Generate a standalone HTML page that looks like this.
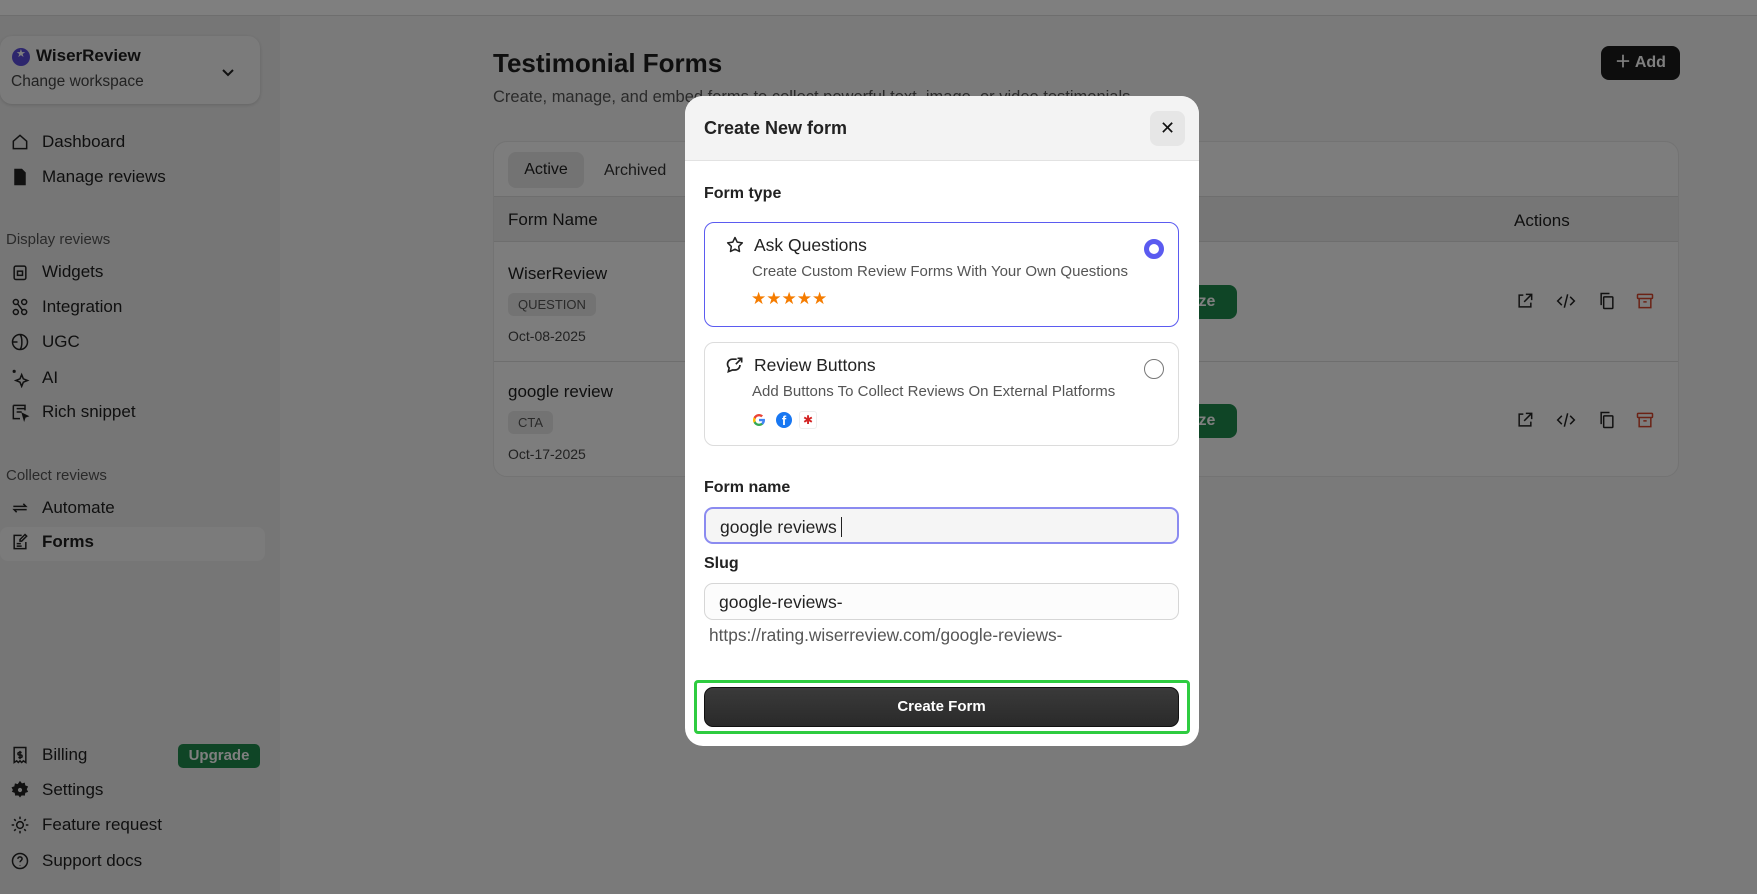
<!DOCTYPE html>
<html><head><meta charset="utf-8"><style>
*{box-sizing:border-box;margin:0;padding:0}
body{width:1757px;height:894px;position:relative;overflow:hidden;font-family:"Liberation Sans",sans-serif;background:#f4f4f4;color:#1f1f1f}
.a{position:absolute;white-space:nowrap}
.side{position:absolute;left:0;top:16px;width:280px;height:878px;background:#ececec}
.top{position:absolute;left:0;top:0;width:1757px;height:16px;background:#fff;border-bottom:1px solid #ddd}
.nav{position:absolute;left:10px;font-size:17px;color:#1f1f1f;display:flex;align-items:center;gap:12px}
.nav svg{width:20px;height:20px;stroke:#222;fill:none;stroke-width:1.8}
.sec{position:absolute;left:6px;font-size:15px;color:#555}
.ov{position:absolute;inset:0;background:rgba(0,0,0,0.5)}
.badge{position:absolute;background:#e6e6e6;border-radius:6px;font-size:13px;color:#555;padding:4px 10px}
.modal{position:absolute;left:685px;top:96px;width:514px;height:650px;background:#fff;border-radius:18px;overflow:hidden}
.card{position:absolute;left:19px;width:475px;border-radius:10px;background:#fff}
.lbl{position:absolute;left:19px;font-size:16px;font-weight:bold;color:#222}
.inp{position:absolute;left:19px;width:475px;height:37px;border-radius:9px;font-size:17.5px;padding:8px 14px;color:#222}
.ic svg{width:20px;height:20px;fill:none;stroke:#222;stroke-width:1.8}
</style></head><body>
<div class="top"></div>
<div class="side"></div>
<div class="a" style="left:0;top:36px;width:260px;height:68px;background:#f6f6f6;border-radius:12px;box-shadow:0 1px 3px rgba(0,0,0,.15)"></div>
<div class="a" style="left:12px;top:48px;width:18px;height:18px;border-radius:50%;background:#5b4cdb"></div>
<div class="a" style="left:16px;top:47px;color:#fff;font-size:11px">★</div>
<div class="a" style="left:36px;top:46px;font-size:17px;font-weight:bold">WiserReview</div>
<div class="a" style="left:11px;top:73px;font-size:15.5px;color:#444">Change workspace</div>
<svg class="a" style="left:220px;top:64px" width="16" height="16" viewBox="0 0 16 16"><path d="M3 6l5 5 5-5" stroke="#222" stroke-width="2" fill="none"/></svg>

<div class="nav" style="top:132px"><svg viewBox="0 0 24 24"><path d="M4 11l8-7 8 7v9H4z"/></svg>Dashboard</div>
<div class="nav" style="top:167px"><svg viewBox="0 0 24 24"><path d="M6 3h8l4 4v14H6z" fill="#222"/></svg>Manage reviews</div>
<div class="sec" style="top:231px">Display reviews</div>
<div class="nav" style="top:262px"><svg viewBox="0 0 24 24"><rect x="5" y="5" width="14" height="16" rx="2"/><rect x="9" y="11" width="6" height="5"/></svg>Widgets</div>
<div class="nav" style="top:297px"><svg viewBox="0 0 24 24"><circle cx="7" cy="6" r="3"/><circle cx="17" cy="6" r="3"/><circle cx="7" cy="18" r="3"/><circle cx="17" cy="18" r="3"/><path d="M9 8l6 8"/></svg>Integration</div>
<div class="nav" style="top:332px"><svg viewBox="0 0 24 24"><circle cx="12" cy="12" r="9"/><path d="M3 12h6M12 3c3 3 3 15 0 18"/></svg>UGC</div>
<div class="nav" style="top:368px"><svg viewBox="0 0 24 24"><path d="M14 8l2 5 5 2-5 2-2 5-2-5-5-2 5-2z"/><circle cx="5" cy="4" r="1" fill="#222"/></svg>AI</div>
<div class="nav" style="top:402px"><svg viewBox="0 0 24 24"><path d="M4 4h14v6M4 4v16h8M8 8h10M8 12h6"/><path d="M15 14l6 3-3 1-1 3z" fill="#222"/></svg>Rich snippet</div>
<div class="sec" style="top:467px">Collect reviews</div>
<div class="nav" style="top:498px"><svg viewBox="0 0 24 24"><path d="M4 10h15l-3-3M20 14H5l3 3"/></svg>Automate</div>
<div class="a" style="left:0;top:527px;width:265px;height:34px;background:#f7f7f7;border-radius:8px"></div>
<div class="nav" style="top:532px;font-weight:bold"><svg viewBox="0 0 24 24"><path d="M14 4H5v16h14v-8M8 14h5M8 17h6"/><path d="M18 3l2 2-6 6h-2v-2z"/></svg>Forms</div>
<div class="nav" style="top:745px"><svg viewBox="0 0 24 24"><path d="M5 3h14v18l-3-2-2 2-2-2-2 2-2-2-3 2z"/><path d="M12 7v10M14 9h-3a1.5 1.5 0 000 3h2a1.5 1.5 0 010 3h-3"/></svg>Billing</div>
<div class="a" style="left:178px;top:744px;width:82px;height:24px;background:#1f8a4c;border-radius:5px;color:#fff;font-size:15px;font-weight:bold;text-align:center;line-height:24px">Upgrade</div>
<div class="nav" style="top:780px"><svg viewBox="0 0 24 24"><path d="M12 2.5l2 2.5 3-.8.6 3 2.9 1.1-1.4 2.7 1.4 2.7-2.9 1.1-.6 3-3-.8-2 2.5-2-2.5-3 .8-.6-3-2.9-1.1L4.5 12 3.1 9.3 6 8.2l.6-3 3 .8z" fill="#222"/><circle cx="12" cy="12" r="2.5" fill="#ececec" stroke="none"/></svg>Settings</div>
<div class="nav" style="top:815px"><svg viewBox="0 0 24 24"><circle cx="12" cy="12" r="4"/><path d="M12 2v3M12 19v3M2 12h3M19 12h3M5 5l2 2M17 17l2 2M5 19l2-2M17 7l2-2"/></svg>Feature request</div>
<div class="nav" style="top:851px"><svg viewBox="0 0 24 24"><circle cx="12" cy="12" r="9"/><path d="M9.5 9.5a2.5 2.5 0 115 0c0 2-2.5 2-2.5 4M12 17v.5"/></svg>Support docs</div>

<div class="a" style="left:493px;top:48px;font-size:26px;font-weight:bold">Testimonial Forms</div>
<div class="a" style="left:493px;top:88px;font-size:16.5px;color:#555">Create, manage, and embed forms to collect powerful text, image, or video testimonials</div>
<div class="a" style="left:1601px;top:46px;width:79px;height:34px;background:#1a1a1a;border-radius:8px;color:#fff;font-size:16px;font-weight:bold;line-height:34px;padding-left:14px">＋ Add</div>

<div class="a" style="left:493px;top:141px;width:1186px;height:336px;background:#fafafa;border:1px solid #e6e6e6;border-radius:14px;overflow:hidden">
  <div class="a" style="left:14px;top:10px;width:76px;height:36px;background:#e6e6e6;border-radius:8px;font-size:16px;line-height:36px;text-align:center">Active</div>
  <div class="a" style="left:110px;top:20px;font-size:16px;color:#333">Archived</div>
  <div class="a" style="left:0;top:54px;width:1186px;height:46px;background:#ededed;border-top:1px solid #ddd;border-bottom:1px solid #ddd"></div>
  <div class="a" style="left:14px;top:68px;font-size:17px">Form Name</div>
  <div class="a" style="left:1020px;top:69px;font-size:17px">Actions</div>
  <div class="a" style="left:0;top:219px;width:1186px;height:1px;background:#ddd"></div>
  <div class="a" style="left:14px;top:122px;font-size:17px">WiserReview</div>
  <div class="badge" style="left:14px;top:151px">QUESTION</div>
  <div class="a" style="left:14px;top:186px;font-size:14px;color:#444">Oct-08-2025</div>
  <div class="a" style="left:14px;top:240px;font-size:17px">google review</div>
  <div class="badge" style="left:14px;top:269px">CTA</div>
  <div class="a" style="left:14px;top:304px;font-size:14px;color:#444">Oct-17-2025</div>
  <div class="a" style="left:640px;top:143px;width:103px;height:34px;background:#1f8a4c;border-radius:8px;color:#fff;font-weight:bold;font-size:16px;line-height:34px;padding-left:60px">ize</div>
  <div class="a" style="left:640px;top:262px;width:103px;height:34px;background:#1f8a4c;border-radius:8px;color:#fff;font-weight:bold;font-size:16px;line-height:34px;padding-left:60px">ize</div>
</div>
<div class="ic">
<svg class="a" style="left:1515px;top:291px" viewBox="0 0 24 24"><path d="M10 5H5v14h14v-5M13 4h7v7M20 4l-9 9"/></svg>
<svg class="a" style="left:1556px;top:291px" viewBox="0 0 24 24"><path d="M7 7l-5 5 5 5M17 7l5 5-5 5M14 4l-4 16"/></svg>
<svg class="a" style="left:1597px;top:291px" viewBox="0 0 24 24"><rect x="8" y="7" width="11" height="14" rx="1"/><path d="M5 17V3h10"/></svg>
<svg class="a" style="left:1635px;top:291px;stroke:#d6452b" viewBox="0 0 24 24"><rect x="3" y="4" width="18" height="5" rx="1"/><path d="M5 9v11h14V9M10 13h4"/></svg>
<svg class="a" style="left:1515px;top:410px" viewBox="0 0 24 24"><path d="M10 5H5v14h14v-5M13 4h7v7M20 4l-9 9"/></svg>
<svg class="a" style="left:1556px;top:410px" viewBox="0 0 24 24"><path d="M7 7l-5 5 5 5M17 7l5 5-5 5M14 4l-4 16"/></svg>
<svg class="a" style="left:1597px;top:410px" viewBox="0 0 24 24"><rect x="8" y="7" width="11" height="14" rx="1"/><path d="M5 17V3h10"/></svg>
<svg class="a" style="left:1635px;top:410px;stroke:#d6452b" viewBox="0 0 24 24"><rect x="3" y="4" width="18" height="5" rx="1"/><path d="M5 9v11h14V9M10 13h4"/></svg>
</div>

<div class="ov"></div>

<div class="modal">
  <div class="a" style="left:0;top:0;width:514px;height:65px;background:#f3f3f3;border-bottom:1px solid #e2e2e2"></div>
  <div class="a" style="left:19px;top:22px;font-size:18px;font-weight:bold;color:#222">Create New form</div>
  <div class="a" style="left:465px;top:15px;width:35px;height:35px;background:#e6e6e6;border-radius:8px;text-align:center;line-height:35px;font-size:18px;color:#111">✕</div>
  <div class="lbl" style="top:89px">Form type</div>
  <div class="card" style="top:126px;height:105px;border:1.5px solid #5b5bf0"></div>
  <svg class="a" style="left:40px;top:139px" width="20" height="20" viewBox="0 0 24 24"><path d="M12 3l2.7 5.6 6.1.8-4.4 4.3 1 6.1L12 17l-5.4 2.8 1-6.1-4.4-4.3 6.1-.8z" fill="none" stroke="#222" stroke-width="1.8" stroke-linejoin="round"/></svg>
  <div class="a" style="left:69px;top:139px;font-size:17.5px;color:#222">Ask Questions</div>
  <div class="a" style="left:67px;top:167px;font-size:15px;color:#555">Create Custom Review Forms With Your Own Questions</div>
  <div class="a" style="left:66px;top:193px;font-size:17px;color:#f57c00;letter-spacing:0px">★★★★★</div>
  <div class="a" style="left:459px;top:143px;width:20px;height:20px;border-radius:50%;border:5px solid #5b5bf0;background:#fff"></div>
  <div class="card" style="top:246px;height:104px;border:1px solid #dcdcdc"></div>
  <svg class="a" style="left:40px;top:259px" width="20" height="20" viewBox="0 0 24 24"><path d="M14 5H9a6 6 0 00-6 6c0 2 1 3.5 2 4.5L4 20l5-2h3a6 6 0 006-6M15 4h5v5M20 4l-7 7" fill="none" stroke="#222" stroke-width="2"/></svg>
  <div class="a" style="left:69px;top:259px;font-size:17.5px;color:#222">Review Buttons</div>
  <div class="a" style="left:67px;top:287px;font-size:15px;color:#555">Add Buttons To Collect Reviews On External Platforms</div>
  <svg class="a" style="left:66px;top:316px" width="16" height="16" viewBox="0 0 24 24"><path d="M21 12.2c0-.7-.1-1.3-.2-1.9H12v3.6h5a4.3 4.3 0 01-1.9 2.8v2.3h3A9 9 0 0021 12.2z" fill="#4285f4"/><path d="M12 21c2.4 0 4.5-.8 6-2.2l-3-2.3c-.8.6-1.8.9-3 .9a5.3 5.3 0 01-5-3.6H4v2.4A9 9 0 0012 21z" fill="#34a853"/><path d="M7 13.8a5.3 5.3 0 010-3.5V7.9H4a9 9 0 000 8.2z" fill="#fbbc05"/><path d="M12 6.6c1.3 0 2.5.5 3.4 1.3l2.6-2.6A9 9 0 004 7.9l3 2.4a5.3 5.3 0 015-3.7z" fill="#ea4335"/></svg>
  <div class="a" style="left:91px;top:316px;width:16px;height:16px;border-radius:50%;background:#1877f2;color:#fff;font-size:13px;font-weight:bold;text-align:center;line-height:18px">f</div>
  <div class="a" style="left:114px;top:315px;width:18px;height:18px;border:1px solid #eee;border-radius:3px;color:#d32323;font-size:12px;text-align:center;line-height:17px">✱</div>
  <div class="a" style="left:459px;top:263px;width:20px;height:20px;border-radius:50%;border:1.5px solid #777"></div>
  <div class="lbl" style="top:383px">Form name</div>
  <div class="inp" style="top:411px;background:#f5f5f5;border:2px solid #8b8bf0">google reviews<span style="display:inline-block;width:1.5px;height:20px;background:#222;vertical-align:-4px;margin-left:4px"></span></div>
  <div class="lbl" style="top:459px">Slug</div>
  <div class="inp" style="top:487px;background:#fcfcfc;border:1px solid #d6d6d6">google-reviews-</div>
  <div class="a" style="left:24px;top:529px;font-size:17.3px;color:#555">https://rating.wiserreview.com/google-reviews-</div>
  <div class="a" style="left:9px;top:584px;width:496px;height:54px;border:3px solid #2ecc40;border-radius:4px"></div>
  <div class="a" style="left:19px;top:591px;width:475px;height:40px;background:linear-gradient(#3a3a3a,#2a2a2a);border:1.5px solid #111;border-radius:9px;color:#fff;font-size:15px;font-weight:bold;text-align:center;line-height:37px">Create Form</div>
</div>
</body></html>
